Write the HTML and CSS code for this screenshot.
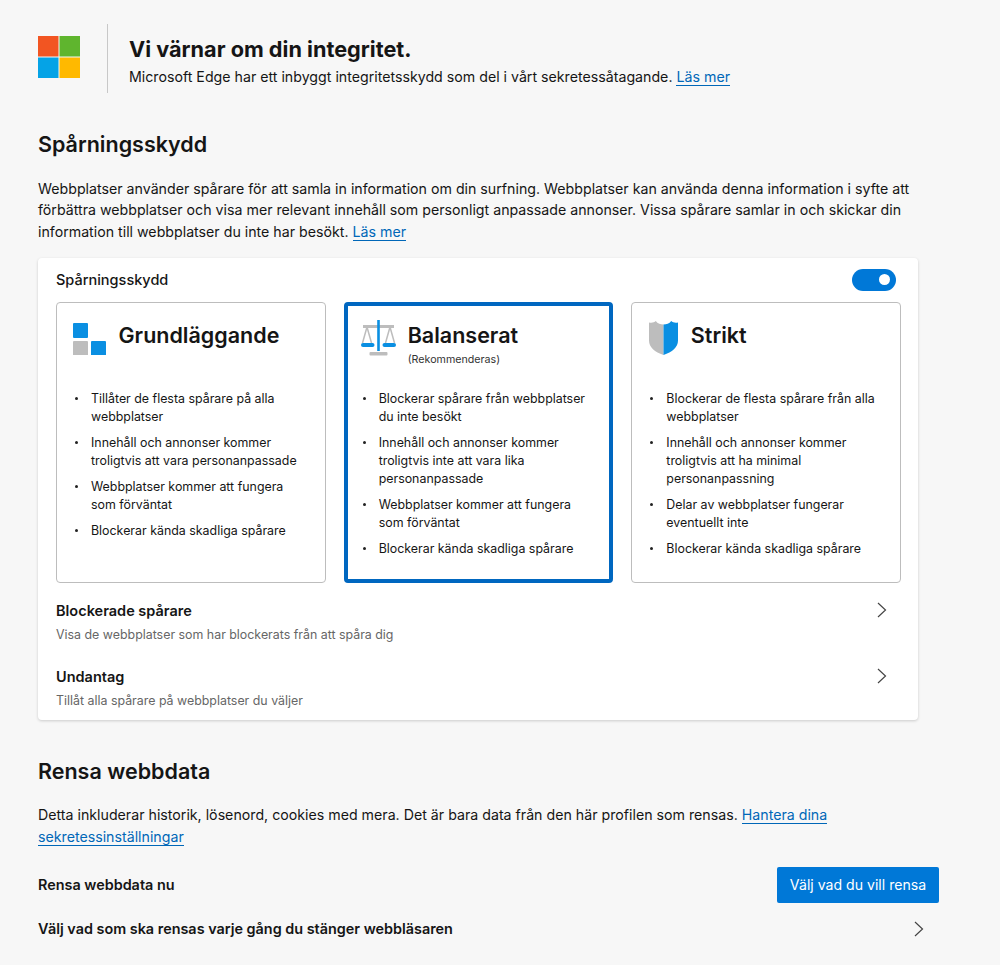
FILE: index.html
```html
<!DOCTYPE html>
<html lang="sv">
<head>
  <meta charset="UTF-8" />
  <title>Sekretess</title>
  <link rel="stylesheet" href="styles.css">
</head>
<body>
  <header class="intro">
    <svg class="ms-logo" viewBox="0 0 42 42" width="42" height="42">
      <rect width="20.5" height="20.5" fill="#f25522"/>
      <rect x="21.5" width="20.5" height="20.5" fill="#5fb52e"/>
      <rect y="21.5" width="20.5" height="20.5" fill="#05a3e6"/>
      <rect x="21.5" y="21.5" width="20.5" height="20.5" fill="#ffb900"/>
    </svg>
    <div class="intro-text">
      <h1>Vi värnar om din integritet.</h1>
      <p>Microsoft Edge har ett inbyggt integritetsskydd som del i vårt sekretessåtagande. <a href="#">Läs mer</a></p>
    </div>
  </header>

  <h2 class="tracking-title">Spårningsskydd</h2>
  <p class="lead">Webbplatser använder spårare för att samla in information om din surfning. Webbplatser kan använda denna information i syfte att förbättra webbplatser och visa mer relevant innehåll som personligt anpassade annonser. Vissa spårare samlar in och skickar din information till webbplatser du inte har besökt. <a href="#">Läs mer</a></p>

  <section class="panel">
    <div class="panel-top">
      <span class="panel-label">Spårningsskydd</span>
      <span class="toggle"><span class="knob"></span></span>
    </div>

    <div class="options">
      <div class="option">
        <div class="option-head">
          <svg class="option-icon icon-squares" viewBox="0 0 33 32" width="33" height="32">
            <rect x="0" y="0" width="15" height="15" rx="1" fill="#0a8fe2"/>
            <rect x="0" y="18" width="15" height="14.5" rx="1" fill="#bdbdbd"/>
            <rect x="18" y="18" width="15" height="14.5" rx="1" fill="#0a8fe2"/>
          </svg>
          <h3>Grundläggande</h3>
        </div>
        <ul>
          <li>Tillåter de flesta spårare på alla webbplatser</li>
          <li>Innehåll och annonser kommer troligtvis att vara personanpassade</li>
          <li>Webbplatser kommer att fungera som förväntat</li>
          <li>Blockerar kända skadliga spårare</li>
        </ul>
      </div>

      <div class="option selected">
        <div class="option-head">
          <svg class="option-icon icon-scales" viewBox="0 0 35 36" width="35" height="36">
            <rect x="2" y="5" width="31" height="3" fill="#bdbdbd"/>
            <path d="M6 7 1.5 23M6 7l4.5 16M29 7l-4.5 16M29 7l4.5 16" fill="none" stroke="#bdbdbd" stroke-width="1.5"/>
            <rect x="0" y="23" width="13.5" height="4" rx="2" fill="#0a8fe2"/>
            <rect x="21.5" y="23" width="13.5" height="4" rx="2" fill="#0a8fe2"/>
            <rect x="16.2" y="0" width="2.6" height="31" fill="#0a8fe2"/>
            <rect x="8.5" y="32" width="18" height="3.5" rx="1" fill="#bdbdbd"/>
          </svg>
          <div>
            <h3>Balanserat</h3>
            <small>(Rekommenderas)</small>
          </div>
        </div>
        <ul>
          <li>Blockerar spårare från webbplatser du inte besökt</li>
          <li>Innehåll och annonser kommer troligtvis inte att vara lika personanpassade</li>
          <li>Webbplatser kommer att fungera som förväntat</li>
          <li>Blockerar kända skadliga spårare</li>
        </ul>
      </div>

      <div class="option">
        <div class="option-head">
          <svg class="option-icon icon-shield" viewBox="0 0 30 35" width="29" height="34">
            <path d="M15 3.5C12 3.5 9 3 7 0 5.5 1.5 3 2 0 1.5V20c0 7 6 12 15 15z" fill="#bdbdbd"/>
            <path d="M15 3.5c3 0 6-.5 8-3.5 1.5 1.5 4 2 7 1.5V20c0 7-6 12-15 15z" fill="#0a8fe2"/>
          </svg>
          <h3>Strikt</h3>
        </div>
        <ul>
          <li>Blockerar de flesta spårare från alla webbplatser</li>
          <li>Innehåll och annonser kommer troligtvis att ha minimal personanpassning</li>
          <li>Delar av webbplatser fungerar eventuellt inte</li>
          <li>Blockerar kända skadliga spårare</li>
        </ul>
      </div>
    </div>

    <div class="link-row">
      <div>
        <strong>Blockerade spårare</strong>
        <span>Visa de webbplatser som har blockerats från att spåra dig</span>
      </div>
      <svg class="chevron" viewBox="0 0 10 16" width="10" height="16"><path d="M1 1l7.5 7L1 15" fill="none" stroke="#444" stroke-width="1.2"/></svg>
    </div>
    <div class="link-row">
      <div>
        <strong>Undantag</strong>
        <span>Tillåt alla spårare på webbplatser du väljer</span>
      </div>
      <svg class="chevron" viewBox="0 0 10 16" width="10" height="16"><path d="M1 1l7.5 7L1 15" fill="none" stroke="#444" stroke-width="1.2"/></svg>
    </div>
  </section>

  <h2 class="clear-title">Rensa webbdata</h2>
  <p class="lead clear-lead">Detta inkluderar historik, lösenord, cookies med mera. Det är bara data från den här profilen som rensas. <a href="#">Hantera dina sekretessinställningar</a></p>

  <div class="clear-row">
    <strong>Rensa webbdata nu</strong>
    <button class="primary">Välj vad du vill rensa</button>
  </div>
  <div class="clear-row on-close">
    <strong>Välj vad som ska rensas varje gång du stänger webbläsaren</strong>
    <svg class="chevron" viewBox="0 0 10 16" width="10" height="16"><path d="M1 1l7.5 7L1 15" fill="none" stroke="#444" stroke-width="1.2"/></svg>
  </div>
</body>
</html>
```
FILE: styles.css
```css
body {
  font-family: Inter, 'Liberation Sans', sans-serif;
  background: #f7f7f7;
  color: #151515;
  margin: 0;
  padding: 24px 61px 0 38px;
  height: 941px;
  overflow: hidden;
  font-size: 14.2px;
}
a {
  color: #0067b8;
  text-decoration: none;
  border-bottom: 1px solid #0067b8;
}
.intro {
  display: flex;
  align-items: flex-start;
}
.ms-logo {
  margin-top: 12px;
  flex: none;
}
.intro-text {
  margin-left: 27px;
  padding: 12px 0 7px 21px;
  height: 50px;
  border-left: 1px solid #c8c8c8;
}
.intro-text h1 {
  font-size: 21.7px;
  font-weight: 700;
  line-height: 26px;
  margin: 0 0 4px;
}
.intro-text p {
  margin: 0;
  line-height: 22px;
  white-space: nowrap;
}
h2 {
  font-size: 21.5px;
  font-weight: 600;
  line-height: 28px;
  margin: 0;
}
.tracking-title {
  margin-top: 37px;
}
.lead {
  margin: 19.5px 0 0;
  line-height: 21.5px;
  width: 880px;
}
.panel {
  width: 845px;
  margin-top: 15.5px;
  padding: 10px 17px 5px 18px;
  background: #fff;
  border-radius: 4px;
  box-shadow: 0 1px 3px rgba(0, 0, 0, 0.18);
}
.panel-top {
  display: flex;
  justify-content: space-between;
  align-items: center;
  height: 24px;
  padding-right: 5px;
  font-size: 14.5px;
  font-weight: 500;
}
.toggle {
  display: flex;
  justify-content: flex-end;
  align-items: center;
  width: 44px;
  height: 22px;
  border-radius: 11px;
  background: #0078d7;
}
.knob {
  width: 11px;
  height: 11px;
  margin-right: 6px;
  border-radius: 50%;
  background: #fff;
}
.options {
  display: flex;
  gap: 18px;
  margin-top: 10px;
}
.option {
  box-sizing: border-box;
  flex: 1;
  height: 281px;
  padding: 19px 14px 0 16px;
  border: 1px solid #bdbdbd;
  border-radius: 4px;
}
.option.selected {
  border: 4px solid #0067c0;
  padding: 16px 11px 0 13px;
}
.option-head {
  display: flex;
  gap: 12.5px;
  height: 68px;
}
.option.selected .option-head {
  gap: 12px;
}
.option-head h3 {
  font-size: 21.5px;
  font-weight: 600;
  line-height: 26px;
  margin: 0;
}
.option-head small {
  display: block;
  font-size: 10.7px;
  line-height: 14px;
  margin-top: 5px;
  color: #333;
}
.option-icon {
  flex: none;
}
.icon-squares {
  margin-top: 1px;
}
.icon-scales {
  margin-top: -2px;
}
.icon-shield {
  margin: -1px 0 0 1px;
}
.option ul {
  margin: 0;
  padding: 0 0 0 2px;
  list-style: none;
  font-size: 12.4px;
  line-height: 18px;
}
.option li {
  display: flex;
  margin-bottom: 8px;
}
.option li::before {
  content: '';
  flex: none;
  width: 3px;
  height: 3px;
  margin: 7px 13px 0 0;
  border-radius: 50%;
  background: #222;
}
.link-row {
  display: flex;
  justify-content: space-between;
  align-items: flex-start;
  box-sizing: border-box;
  height: 66px;
  padding: 17px 14px 0 0;
}
.link-row strong {
  display: block;
  font-size: 14.5px;
  font-weight: 600;
  line-height: 22px;
}
.link-row span {
  display: block;
  margin-top: 4px;
  font-size: 12.4px;
  line-height: 18px;
  color: #666;
}
.link-row .chevron {
  margin-top: 2px;
}
.clear-title {
  margin-top: 37px;
}
.clear-lead {
  margin-top: 19px;
  line-height: 22px;
}
.clear-row {
  display: flex;
  justify-content: space-between;
  align-items: center;
  width: 901px;
  height: 36px;
  margin-top: 19px;
}
.clear-row strong {
  font-size: 14.4px;
  font-weight: 600;
}
.on-close {
  margin-top: 8px;
  padding-right: 15px;
  box-sizing: border-box;
}
.primary {
  height: 36px;
  width: 162px;
  padding: 0;
  border: none;
  border-radius: 2px;
  background: #0078d7;
  color: #fff;
  font-family: inherit;
  font-size: 14.1px;
}
```
